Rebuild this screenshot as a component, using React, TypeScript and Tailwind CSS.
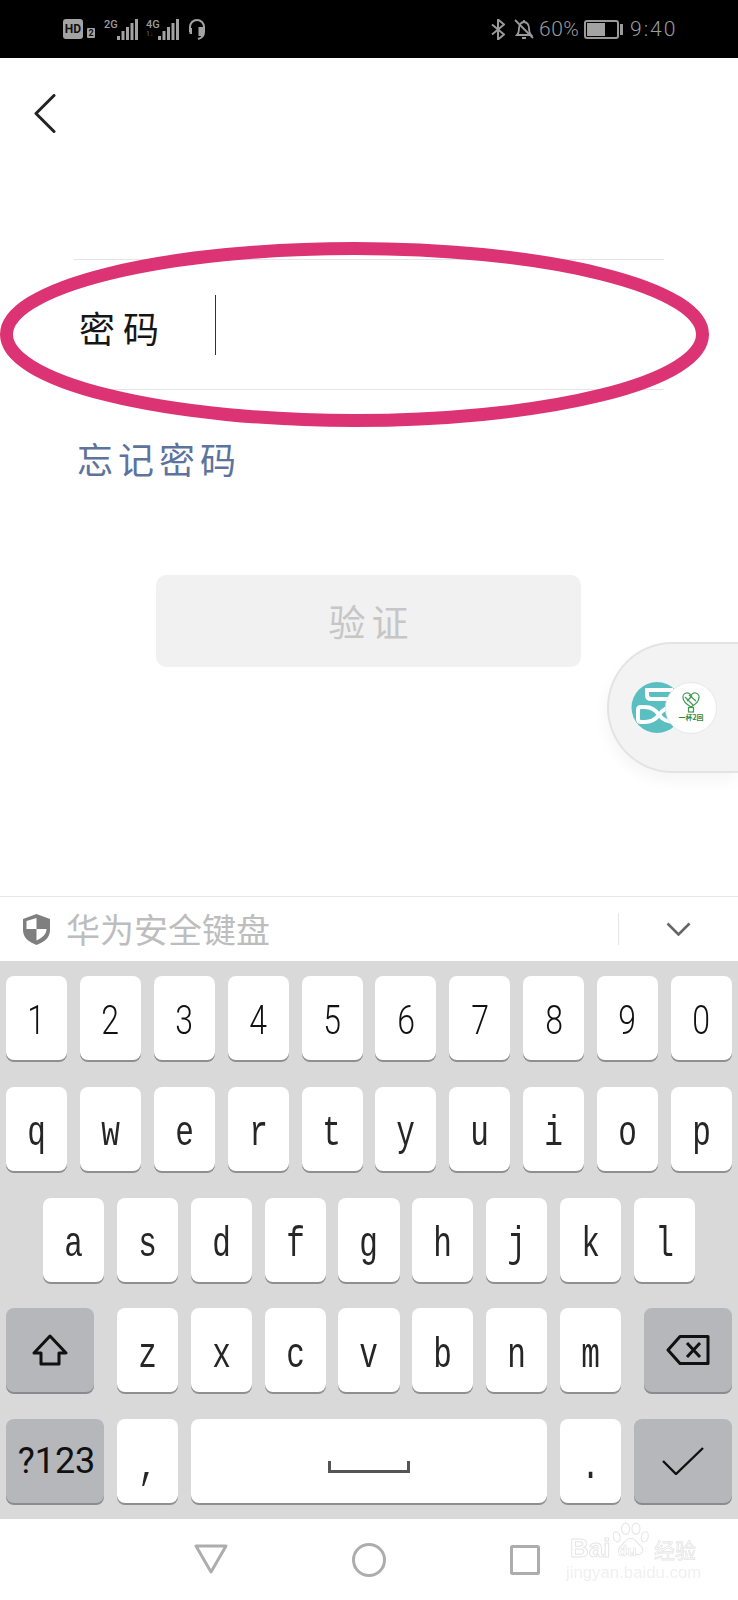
import React from 'react'

const row1 = ['1', '2', '3', '4', '5', '6', '7', '8', '9', '0']
const row2 = ['q', 'w', 'e', 'r', 't', 'y', 'u', 'i', 'o', 'p']
const row3 = ['a', 's', 'd', 'f', 'g', 'h', 'j', 'k', 'l']
const row4 = ['z', 'x', 'c', 'v', 'b', 'n', 'm']

function Key({ label }: { label: string }) {
  return (
    <div className="flex-1 h-[84px] bg-white rounded-[8px] shadow-[0_2px_0_#8f8f8f] flex items-center justify-center pt-[12px] font-['Liberation_Mono',monospace] text-[42px] text-[#262626]">
      <span className="inline-block scale-x-[0.74]">{label}</span>
    </div>
  )
}

function DigitKey({ label }: { label: string }) {
  return (
    <div className="flex-1 h-[84px] bg-white rounded-[8px] shadow-[0_2px_0_#8f8f8f] flex items-center justify-center pt-[5px] font-['Roboto',sans-serif] font-light text-[40px] text-[#111]">
      <span className="inline-block scale-x-[0.8]">{label}</span>
    </div>
  )
}

function ActionKey({ className, children }: { className: string; children: React.ReactNode }) {
  return (
    <div className={"h-[84px] bg-[#b5b7bb] rounded-[8px] shadow-[0_2px_0_#8a8b8e] flex items-center justify-center " + className}>
      {children}
    </div>
  )
}

function Bars() {
  return (
    <svg width="21" height="21" viewBox="0 0 21 21" fill="#a3a3a3">
      <rect x="0" y="17" width="3" height="4" />
      <rect x="4.5" y="12" width="3" height="9" />
      <rect x="9" y="8" width="3" height="13" />
      <rect x="13.5" y="4" width="3" height="17" />
      <rect x="18" y="0" width="3" height="21" />
    </svg>
  )
}

function StatusBar() {
  return (
    <div className="h-[58px] bg-black flex items-center pl-[63px] font-['Roboto',sans-serif] text-[#9c9c9c]">
      <div className="w-[20px] h-[20px] rounded-[3px] bg-[#a3a3a3] flex items-center justify-center text-[12px] font-bold text-[#111] leading-none">HD</div>
      <div className="ml-[4px] mt-[8px] w-[8px] h-[10px] rounded-[1px] bg-[#a3a3a3] flex items-center justify-center text-[9px] font-bold text-[#111] leading-none">2</div>
      <div className="ml-[9px] w-[13px] h-[21px] text-[11px] font-medium leading-[11px]">2G</div>
      <Bars />
      <div className="ml-[8px] w-[12px] h-[21px] text-[11px] font-medium leading-[11px]">
        4G
        <div className="text-[7px] text-[#555] leading-[9px]">1↓</div>
      </div>
      <Bars />
      <svg className="ml-[9px]" width="18" height="22" viewBox="0 0 18 22" fill="none" stroke="#a3a3a3" strokeWidth="2">
        <path d="M2 14V9a7 7 0 0 1 14 0v5c0 4-2 6-6 7" />
        <rect x="1.5" y="10" width="2.5" height="6" fill="#a3a3a3" stroke="none" />
        <rect x="11.5" y="10" width="2.5" height="7" fill="#a3a3a3" />
      </svg>
      <svg className="ml-[285px]" width="14" height="21" viewBox="0 0 14 21" fill="none" stroke="#9a9a9a" strokeWidth="2">
        <path d="M1 5.5l12 10-6 5V.5l6 5-12 10" />
      </svg>
      <svg className="ml-[9px]" width="20" height="21" viewBox="0 0 20 21" fill="none" stroke="#9a9a9a" strokeWidth="1.8">
        <path d="M3 16c2-2 2-4 2-7 0-3 2-6 5-6s5 3 5 6c0 3 0 5 2 7z" />
        <path d="M8 19h4M10 1v2M1 1l18 18" />
      </svg>
      <span className="ml-[5px] w-[45px] text-[21px] font-light tracking-[0.5px] leading-none">60%</span>
      <div className="w-[35px] h-[19px] rounded-[3px] border-2 border-[#9a9a9a] p-[1px]">
        <div className="w-[18px] h-full bg-[#a3a3a3]" />
      </div>
      <div className="ml-[1px] w-[3px] h-[11px] bg-[#9a9a9a]" />
      <span className="ml-[7px] text-[21px] font-light tracking-[2px] leading-none">9:40</span>
    </div>
  )
}

function FloatBall() {
  return (
    <div className="absolute right-0 top-[642px] w-[131px] h-[131px] rounded-l-[66px] bg-[#f3f3f3] border-2 border-r-0 border-[#e3e3e3] shadow-[-2px_8px_14px_rgba(0,0,0,0.04)]">
      <svg className="absolute left-[22px] top-[38px]" width="60" height="51" viewBox="0 0 60 51">
        <circle cx="26" cy="25.5" r="25.5" fill="#5bbfc2" />
        <path d="M42 8H16v5q0 4 4 4H42" fill="none" stroke="#fff" strokeWidth="4" />
        <path d="M28 33C24 27 20 25 14 25H10Q7 25 7 28V37Q7 40 10 40H14C20 40 24 38 28 33C32 27 36 25 44 25M28 33C32 38 36 40 44 40" fill="none" stroke="#fff" strokeWidth="4" />
      </svg>
      <div className="absolute left-[56px] top-[38px] w-[52px] h-[52px] rounded-full bg-white border border-[#e8e8e8] flex flex-col items-center pt-[9px]">
        <svg width="18" height="21" viewBox="0 0 18 21" fill="none" stroke="#3f9a4f" strokeWidth="1.2">
          <path d="M9 15C4 12 1 9 1 5.500a3.800 3.800 0 0 1 8-1 3.800 3.800 0 0 1 8 1C17 9 14 12 9 15z" />
          <path d="M3 5l8 8M7 3l7 6M5 9l5-5" />
          <rect x="6.500" y="15.500" width="5" height="4.500" />
        </svg>
        <span className="font-['Noto_Sans_CJK_SC',sans-serif] font-bold text-[7px] leading-[8px] text-[#2f8a42]">一杯2回</span>
      </div>
    </div>
  )
}

function Watermark() {
  return (
    <div className="absolute left-[566px] top-[1518px] w-[135px] h-[72px] blur-[0.4px]">
      <span className="absolute left-[4px] top-[15px] font-['Liberation_Sans',sans-serif] font-bold text-[26px] leading-[30px] text-white [-webkit-text-stroke:1px_#e6e6e6]">Bai</span>
      <svg className="absolute left-[47px] top-[4px]" width="37" height="34" viewBox="0 0 50 46" fill="#fff" stroke="#e6e6e6" strokeWidth="1.5">
        <ellipse cx="5" cy="20" rx="4.500" ry="7" transform="rotate(-15 5 20)" />
        <ellipse cx="17" cy="9" rx="5.500" ry="7.500" />
        <ellipse cx="31" cy="9" rx="5.500" ry="7.500" />
        <ellipse cx="43" cy="20" rx="4.500" ry="7" transform="rotate(15 43 20)" />
        <path d="M24 22c6 0 9 7 14 11 5 5 1 12-5 11-4-1-6-2-9-2s-5 1-9 2c-6 1-10-6-5-11 5-4 8-11 14-11z" />
      </svg>
      <span className="absolute left-[52px] top-[24px] font-['Liberation_Sans',sans-serif] font-bold text-[15px] leading-[18px] text-white [-webkit-text-stroke:0.7px_#e6e6e6]">du</span>
      <span className="absolute left-[88px] top-[19px] font-['Noto_Sans_CJK_SC',sans-serif] text-[21px] leading-[24px] text-white [-webkit-text-stroke:0.8px_#e6e6e6]">经验</span>
      <span className="absolute left-0 top-[44px] font-['Liberation_Sans',sans-serif] text-[16.800px] leading-[22px] text-[#f0f0f0]">jingyan.baidu.com</span>
    </div>
  )
}

export default function App() {
  return (
    <div className="relative w-[738px] h-[1600px] bg-white overflow-hidden flex flex-col font-['Noto_Sans_CJK_SC',sans-serif]">
      <StatusBar />

      <div className="flex-1 flex flex-col">
        <svg className="ml-[34px] mt-[36px]" width="22" height="39" viewBox="0 0 22 39" fill="none" stroke="#222" strokeWidth="3" strokeLinecap="round" strokeLinejoin="round">
          <path d="M20 1.500L2 19.500l18 18" />
        </svg>

        <div className="mx-[74px] mt-[126px] h-[131px] border-y border-[#e4e4e4] flex items-center">
          <span className="ml-[5px] mt-[4px] w-[136px] text-[36px] leading-none tracking-[8px] text-[#151515]">密码</span>
          <div className="w-px h-[60px] bg-[#333]" />
        </div>

        <div className="ml-[77px] mt-[50px] text-[36px] leading-[36px] tracking-[5px] text-[#5d739c]">忘记密码</div>

        <div className="ml-[156px] mt-[99px] w-[425px] h-[92px] rounded-[10px] bg-[#f1f1f1] flex items-center justify-center pl-[6px] pt-[2px] text-[37px] tracking-[6px] text-[#c6c6c6]">验证</div>
      </div>

      <div className="h-[65px] border-t border-[#e6e6e6] flex items-center">
        <svg className="ml-[23px]" width="27" height="31" viewBox="0 0 27 31">
          <path d="M13.500 0L27 5v11c0 8-6 12-13.500 15C6 28 0 24 0 16V5z" fill="#7f7f7f" />
          <path d="M13.500 4v11H3.500V7zM13.500 15h10c0 6-5 9-10 11.500z" fill="#fff" />
        </svg>
        <span className="ml-[16px] text-[34px] leading-none text-[#bdbdbd]">华为安全键盘</span>
        <div className="ml-auto w-px h-[32px] bg-[#e6e6e6]" />
        <svg className="ml-[47px] mr-[47px]" width="25" height="14" viewBox="0 0 25 14" fill="none" stroke="#666" strokeWidth="2.600">
          <path d="M1.500 1.500L12.500 12.500 23.500 1.500" />
        </svg>
      </div>

      <div className="h-[558px] bg-[#d9d9d9] flex flex-col gap-[26.750px] pt-[15px]">
        <div className="flex gap-[12.800px] px-[6px]">
          {row1.map((k) => <DigitKey key={k} label={k} />)}
        </div>
        <div className="flex gap-[12.800px] px-[6px]">
          {row2.map((k) => <Key key={k} label={k} />)}
        </div>
        <div className="flex gap-[12.800px] px-[43px]">
          {row3.map((k) => <Key key={k} label={k} />)}
        </div>
        <div className="flex items-center px-[6px]">
          <ActionKey className="w-[88px]">
            <svg width="36" height="32" viewBox="0 0 36 32" fill="none" stroke="#111" strokeWidth="3" strokeLinejoin="round">
              <path d="M18 2L34 19H27V30H9V19H2z" />
            </svg>
          </ActionKey>
          <div className="flex-1 flex gap-[12.800px] mx-[23px]">
            {row4.map((k) => <Key key={k} label={k} />)}
          </div>
          <ActionKey className="w-[88px]">
            <svg width="44" height="30" viewBox="0 0 44 30" fill="none" stroke="#111" strokeWidth="3" strokeLinejoin="round">
              <path d="M14 1.500H42V28.500H14L2 15z" />
              <path d="M21 8l13 14M34 8L21 22" />
            </svg>
          </ActionKey>
        </div>
        <div className="flex items-center gap-[12.800px] px-[6px]">
          <ActionKey className="w-[98px] pl-[3px] font-['Roboto',sans-serif] text-[36px] text-[#111]">?123</ActionKey>
          <div className="w-[61px] flex"><Key label="," /></div>
          <div className="flex-1 h-[84px] bg-white rounded-[8px] shadow-[0_2px_0_#8f8f8f] flex items-center justify-center pt-[12px]">
            <svg width="82" height="12" viewBox="0 0 82 12" fill="none" stroke="#555" strokeWidth="3">
              <path d="M1.500 0V10.500H80.500V0" />
            </svg>
          </div>
          <div className="w-[61px] flex"><Key label="." /></div>
          <ActionKey className="w-[98px]">
            <svg width="42" height="28" viewBox="0 0 42 28" fill="none" stroke="#111" strokeWidth="2.400">
              <path d="M1 14L14 27 41 1" />
            </svg>
          </ActionKey>
        </div>
      </div>

      <div className="h-[81px] bg-white flex items-center justify-center gap-[124px] pr-[4px]">
        <svg className="-mt-[2px]" width="34" height="30" viewBox="0 0 34 30" fill="none" stroke="#adadad" strokeWidth="3" strokeLinejoin="round">
          <path d="M2 2H32L17 28z" />
        </svg>
        <svg width="34" height="34" viewBox="0 0 34 34" fill="none" stroke="#adadad" strokeWidth="3">
          <circle cx="17" cy="17" r="15.500" />
        </svg>
        <svg width="30" height="30" viewBox="0 0 30 30" fill="none" stroke="#adadad" strokeWidth="3">
          <rect x="1.500" y="1.500" width="27" height="27" rx="1" />
        </svg>
      </div>

      {/* ring drawn on the screenshot, lies over the password field */}
      <svg className="absolute left-0 top-[242px]" width="709" height="185" viewBox="0 0 709 185" fill="none">
        <ellipse cx="354.500" cy="92.500" rx="348" ry="86" stroke="#dc3375" strokeWidth="13" />
      </svg>

      <FloatBall />
      <Watermark />
    </div>
  )
}
